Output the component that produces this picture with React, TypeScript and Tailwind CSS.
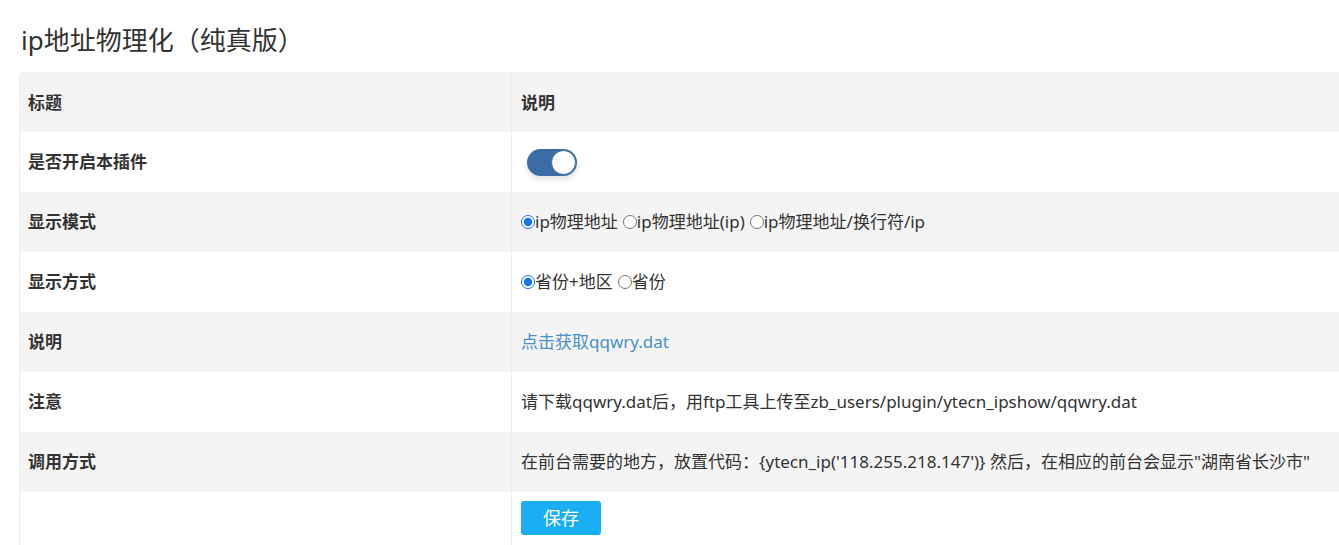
import { useState } from "react";

const font = { fontFamily: '"Noto Sans", "Noto Sans CJK SC", sans-serif' };

function Toggle() {
    const [on, setOn] = useState(true);
    return (
        <button
            onClick={() => setOn(!on)}
            className={`relative ml-[6px] w-[50px] h-[27px] rounded-full ${on ? "bg-[#3a6da3]" : "bg-gray-300"} shadow-[0_3px_6px_rgba(0,0,0,0.12)]`}
        >
            <span
                className={`absolute top-[1px] ${on ? "right-[1px]" : "left-[1px]"} w-[25px] h-[25px] rounded-full bg-white border border-[#3a6da3]`}
            />
        </button>
    );
}

function Radio({ name, label, checked }: { name: string; label: string; checked?: boolean }) {
    return (
        <label className="inline-flex items-center mr-[5px]">
            <input type="radio" name={name} defaultChecked={checked} className="m-0 w-[14px] h-[14px] accent-[#1a73e8]" />
            <span>{label}</span>
        </label>
    );
}

export default function App() {
    const rows: { title: string; content: React.ReactNode }[] = [
        { title: "是否开启本插件", content: <Toggle /> },
        {
            title: "显示模式",
            content: (
                <div className="flex items-center">
                    <Radio name="mode" label="ip物理地址" checked />
                    <Radio name="mode" label="ip物理地址(ip)" />
                    <Radio name="mode" label="ip物理地址/换行符/ip" />
                </div>
            ),
        },
        {
            title: "显示方式",
            content: (
                <div className="flex items-center">
                    <Radio name="way" label="省份+地区" checked />
                    <Radio name="way" label="省份" />
                </div>
            ),
        },
        {
            title: "说明",
            content: <a href="#" className="text-[#4a8fc7]">点击获取qqwry.dat</a>,
        },
        {
            title: "注意",
            content: <span>请下载qqwry.dat后，用ftp工具上传至zb_users/plugin/ytecn_ipshow/qqwry.dat</span>,
        },
        {
            title: "调用方式",
            content: <span>在前台需要的地方，放置代码：{"{ytecn_ip('118.255.218.147')}"} 然后，在相应的前台会显示"湖南省长沙市"</span>,
        },
    ];

    return (
        <div className="w-full h-[545px] overflow-hidden bg-white text-[#333]" style={font}>
            <h1 className="pl-[21px] pt-[21px] h-[72px] text-[26px] leading-[38px] font-normal text-[#333]">
                ip地址物理化（纯真版）
            </h1>
            <div className="ml-[19px] w-[1360px] border border-[#f0f0f0] rounded-tl-[4px] overflow-hidden">
                <div className="flex h-[59px] bg-[#f4f4f4] text-[17px] font-bold">
                    <div className="w-[492px] flex items-center pl-[8px] border-r border-[#ececec]">标题</div>
                    <div className="flex-1 flex items-center pl-[9px]">说明</div>
                </div>
                {rows.map((row, i) => (
                    <div key={row.title} className={`flex h-[60px] ${i % 2 === 1 ? "bg-[#f4f4f4]" : "bg-white"}`}>
                        <div className="w-[492px] flex items-center pl-[8px] border-r border-[#ececec] text-[17px] font-bold">
                            {row.title}
                        </div>
                        <div className="flex-1 flex items-center pl-[9px] text-[17px]">{row.content}</div>
                    </div>
                ))}
                <div className="flex h-[60px] bg-white">
                    <div className="w-[492px] border-r border-[#ececec]" />
                    <div className="flex-1 pl-[9px] pt-[9px]">
                        <button className="w-[80px] h-[34px] rounded-[3px] bg-[#1aaef5] text-white text-[18px]">保存</button>
                    </div>
                </div>
            </div>
        </div>
    );
}
